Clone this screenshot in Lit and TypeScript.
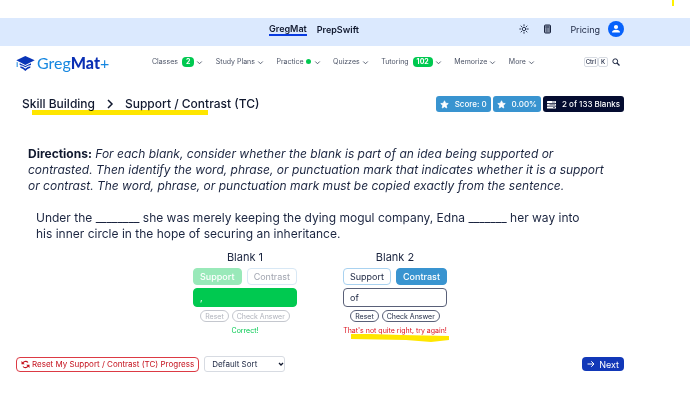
import { LitElement, html, css, nothing } from "lit";
import { customElement, property } from "lit/decorators.js";
import { classMap } from "lit/directives/class-map.js";

const star = html`<svg class="ico" viewBox="0 0 24 24" aria-hidden="true"><path fill="currentColor" stroke="currentColor" stroke-width="2" stroke-linejoin="round" d="M12 2l3 6.600 7 .8-5.200 4.900 1.400 7.100L12 17.900l-6.200 3.500 1.400-7.100L2 9.400l7-.8z"/></svg>`;

interface NavItem {
  label: string;
  badge?: string;
  dot?: boolean;
}

const NAV: NavItem[] = [
  { label: "Classes", badge: "2" },
  { label: "Study Plans" },
  { label: "Practice", dot: true },
  { label: "Quizzes" },
  { label: "Tutoring", badge: "102" },
  { label: "Memorize" },
  { label: "More" },
];

@customElement("site-header")
class SiteHeader extends LitElement {
  static styles = css`
    :host { display: block; color: #1b2540; }
    a { color: inherit; text-decoration: none; }
    button { font: inherit; color: inherit; background: none; border: 0; padding: 0; display: flex; align-items: center; }
    .top { background: #dbe9fe; height: 28px; display: grid; grid-template-columns: 1fr auto 1fr; align-items: center; padding: 0 66px 0 4px; }
    .brands { grid-column: 2; display: flex; gap: 10px; align-items: center; font-size: 9px; line-height: 11px; font-weight: 600; color: #10182e; margin-bottom: 6px; }
    .brands .on { border-bottom: 2px solid #0a3be0; }
    .tools { display: flex; justify-content: flex-end; align-items: center; font-size: 9px; margin-bottom: 6px; }
    .tools svg { display: block; }
    .sun { margin-right: 14px; }
    .calc { margin-right: 18px; }
    .price { margin-right: 8px; }
    .nav { display: grid; grid-template-columns: 136px minmax(0, 383px) 1fr; align-items: center; height: 32px; padding: 0 66px 0 16px; }
    .logo { display: flex; align-items: center; gap: 2px; font: 16px/24px Lato, sans-serif; color: #1687e0; padding-top: 2px; }
    .logo b { color: #0a2fb4; font-weight: 900; }
    .menu { display: flex; justify-content: space-between; align-items: center; font-size: 7px; line-height: 10px; color: #4b5366; }
    .menu button { gap: 2px; white-space: nowrap; }
    .badge { background: #00c950; color: #fff; font-weight: 700; border-radius: 4px; padding: 0 4px; margin-left: 2px; }
    .dot { width: 5px; height: 5px; border-radius: 50%; background: #00c950; margin: 0 1px 2px 0; }
    .find { display: flex; justify-content: flex-end; align-items: center; padding: 0 4px 0 0; }
    kbd { font: 500 6px/8px Inter, sans-serif; border: 1px solid #d7dbe2; border-radius: 2px; padding: 0 1px; min-width: 6px; text-align: center; }
    .find button { margin-left: 4px; }
  `;

  render() {
    return html`
      <div class="top">
        <div class="brands"><a class="on" href="#gregmat">GregMat</a><a href="#prepswift">PrepSwift</a></div>
        <div class="tools">
          <button class="sun" aria-label="Theme"><svg width="10" height="10" viewBox="0 0 20 20" fill="none" stroke="currentColor" stroke-width="1.800" stroke-linecap="round"><circle cx="10" cy="10" r="3.500"/><path d="M10 1.500v2M10 16.500v2M1.500 10h2M16.500 10h2M4 4l1.400 1.400M14.600 14.600L16 16M4 16l1.400-1.400M14.600 5.400L16 4"/></svg></button>
          <button class="calc" aria-label="Calculator"><svg width="9" height="10" viewBox="0 0 18 20"><rect x="3" y="2" width="12" height="16" rx="2" fill="#8d98ad" stroke="currentColor" stroke-width="2"/><path d="M5 6h8M6 10h1.500M9 10h1.500M12 10h1M6 14h1.500M9 14h1.500M12 14h1" stroke="currentColor" stroke-width="2"/></svg></button>
          <a class="price" href="#pricing">Pricing</a>
          <button aria-label="Account"><svg width="16" height="16" viewBox="0 0 32 32"><circle cx="16" cy="16" r="16" fill="#0762fb"/><circle cx="16" cy="12" r="4.200" fill="#fff"/><path fill="#fff" d="M8 23c0-4 3-5.500 8-5.500s8 1.500 8 5.500z"/></svg></button>
        </div>
      </div>
      <div class="nav">
        <a class="logo" href="#home" aria-label="GregMat+">
          <svg width="19" height="15" viewBox="0 0 57 45"><path fill="#0a35b8" d="M28 0L56 13 28 27 1 13z"/><path fill="#0a35b8" d="M11 22l17 8 17-8v5l-9 2-8 5-8-5-9-2z"/><path fill="#0a35b8" d="M13 31l8 2 7 5 7-5 8-2v4l-8 4-7 6-7-6-8-4z"/><path fill="#1687e0" d="M2 18l3 1v14H2z"/></svg>
          <span>Greg<b>Mat</b>+</span>
        </a>
        <nav class="menu">
          ${NAV.map((n) => html`<button><span>${n.label}</span>${n.badge ? html`<span class="badge">${n.badge}</span>` : nothing}${n.dot ? html`<span class="dot"></span>` : nothing}<svg width="7" height="5" viewBox="0 0 14 10" fill="none" stroke="currentColor" stroke-width="1.800"><path d="M2.500 3L7 7.500 11.500 3"/></svg></button>`)}
        </nav>
        <div class="find"><kbd>Ctrl</kbd><kbd>K</kbd>
          <button aria-label="Search"><svg width="8" height="8" viewBox="0 0 16 16" fill="none" stroke="currentColor" stroke-width="2"><circle cx="6.500" cy="6.500" r="4.800"/><path d="M10 10l5 5" stroke-width="2.600"/></svg></button>
        </div>
      </div>`;
  }
}

@customElement("blank-card")
class BlankCard extends LitElement {
  @property() name = "";
  @property() choice = "";
  @property() answer = "";
  @property() message = "";
  @property({ type: Boolean }) solved = false;

  static styles = css`
    :host { display: block; color: #1b2540; }
    .card { display: flex; flex-direction: column; align-items: stretch; text-align: center; }
    label { font-size: 11px; line-height: 16px; margin-bottom: 3px; }
    button { font: inherit; color: inherit; background: #fff; box-sizing: border-box; }
    .row { display: flex; justify-content: space-between; gap: 3px; }
    .pick { font-size: 9px; line-height: 15px; height: 17px; border: 1px solid #a9d2f0; border-radius: 4px; padding: 0 6px; }
    .pick.on { background: #3994d0; border-color: #3994d0; color: #fff; font-weight: 500; }
    input { font: 9px/16px Inter, sans-serif; color: inherit; width: 100%; min-width: 0; box-sizing: border-box; height: 19px; border: 1px solid #596078; border-radius: 4px; padding: 0 6px; margin: 3px 0; background: #fff; }
    .acts { display: flex; justify-content: center; gap: 3px; }
    .acts button { font-size: 7px; line-height: 9px; height: 12px; border: 1px solid #596078; border-radius: 6px; padding: 0 4px; white-space: nowrap; }
    .msg { font-size: 7px; line-height: 10px; margin: 4px 0 0; color: #dc1420; position: relative; white-space: nowrap; }
    .mark { position: absolute; left: 8px; top: 8px; width: 98px; height: 9px; mix-blend-mode: multiply; }
    .solved .pick { border-color: #d8e8f5; color: #a1a5b0; }
    .solved .pick.on { background: #99e9b9; border-color: #99e9b9; color: #fff; }
    .solved input { background: #00c950; border-color: #00c950; color: #fff; }
    .solved .acts button { border-color: #c4c7ce; color: #b0b3bc; }
    .solved .msg { color: #00c950; }
  `;

  render() {
    return html`<div class=${classMap({ card: true, solved: this.solved })}>
      <label for="word">${this.name}</label>
      <div class="row">${["Support", "Contrast"].map((c) => html`<button class=${classMap({ pick: true, on: c === this.choice })}>${c}</button>`)}</div>
      <input id="word" type="text" size="1" .value=${this.answer} />
      <div class="acts"><button>Reset</button><button>Check Answer</button></div>
      <p class="msg">${this.message}${this.solved ? nothing : html`<svg class="mark" viewBox="0 0 98 9" preserveAspectRatio="none"><path fill="#ffe600" d="M0 0h20l30 1 48 1v4L80 8 55 6 0 5z"/></svg>`}</p>
    </div>`;
  }
}

@customElement("app-root")
class AppRoot extends LitElement {
  static styles = css`
    :host { display: block; min-height: 100vh; box-sizing: border-box; padding-top: 18px; background: #fff; color: #1b2540; font-family: Inter, sans-serif; position: relative; }
    .speck { position: absolute; top: 0; right: 16px; width: 2px; height: 6px; background: #fff200; }
    main { padding: 18px 66px 0 16px; }
    .head { display: flex; justify-content: space-between; align-items: center; padding-left: 6px; }
    .crumbs { display: flex; align-items: center; gap: 11px; margin: 0; font-size: 12px; line-height: 16px; font-weight: 500; color: #10182e; position: relative; }
    .crumbs a { color: inherit; text-decoration: none; }
    .crumbs .mark { position: absolute; left: 10px; top: 14px; width: 176px; height: 5px; background: #ffe600; mix-blend-mode: multiply; }
    .stats { display: flex; gap: 2px; }
    .stat { display: flex; align-items: center; gap: 6px; height: 16px; border-radius: 3px; padding: 0 4px; background: #3994d0; color: #fff; font-size: 8px; font-weight: 500; white-space: nowrap; }
    .stat.dark { background: #040c30; }
    .ico { width: 9px; height: 9px; }
    .text { font-size: 12px; line-height: 16px; margin: 0; }
    .dir { padding: 0 12px; margin-top: 34px; }
    .dir b { color: #10182e; }
    .sent { padding: 0 28px 0 20px; margin-top: 16px; }
    .blanks { display: flex; justify-content: center; gap: 46px; margin-top: 7px; }
    .blanks blank-card { flex: 0 0 104px; }
    .foot { display: flex; align-items: center; margin-top: 20px; }
    .foot button { display: flex; align-items: center; gap: 2px; font: 8px/13px Inter, sans-serif; height: 15px; box-sizing: border-box; border-radius: 4px; padding: 0 4px; white-space: nowrap; }
    .foot .reset { background: #fff; border: 1px solid #dc3a44; color: #c4101c; }
    .foot .next { margin-left: auto; background: #1238b8; border: 0; color: #fff; gap: 4px; padding: 0 5px; height: 14px; font-size: 9px; }
    .sort { position: relative; margin-left: 5px; display: flex; }
    .sort svg { position: absolute; right: 1px; top: 5px; pointer-events: none; }
    select { appearance: none; font: 8px/14px Inter, sans-serif; color: #1b2540; background: #fff; border: 1px solid #d7dbe2; border-radius: 3px; height: 16px; width: 81px; margin: 0; padding: 0 0 0 7px; }
  `;

  render() {
    return html`
      <span class="speck"></span>
      <site-header></site-header>
      <main>
        <div class="head">
          <h1 class="crumbs"><a href="#skills">Skill Building</a>
            <svg width="8" height="10" viewBox="0 0 8 10" fill="none" stroke="currentColor" stroke-width="1.500"><path d="M2 1l4 4-4 4"/></svg>
            <span>Support / Contrast (TC)</span><span class="mark"></span></h1>
          <div class="stats">
            <span class="stat">${star}Score: 0</span>
            <span class="stat">${star}0.00%</span>
            <span class="stat dark"><svg class="ico" viewBox="0 0 18 18" aria-hidden="true"><rect y="2" width="18" height="4" rx="1" fill="#fff"/><rect y="7.500" width="18" height="4" rx="1" fill="#fff"/><rect y="13" width="18" height="4" rx="1" fill="#fff"/><path d="M10 4h6M5 9.500h11M12 15h4" stroke="#040c30" stroke-width="1.200"/></svg>2 of 133 Blanks</span>
          </div>
        </div>
        <p class="text dir"><b>Directions:</b> <i>For each blank, consider whether the blank is part of an idea being supported or contrasted. Then identify the word, phrase, or punctuation mark that indicates whether it is a support or contrast. The word, phrase, or punctuation mark must be copied exactly from the sentence.</i></p>
        <p class="text sent">Under the ________ she was merely keeping the dying mogul company, Edna _______ her way into his inner circle in the hope of securing an inheritance.</p>
        <div class="blanks">
          <blank-card name="Blank 1" choice="Support" answer="," message="Correct!" solved></blank-card>
          <blank-card name="Blank 2" choice="Contrast" answer="of" message="That's not quite right, try again!"></blank-card>
        </div>
        <div class="foot">
          <button class="reset"><svg width="9" height="9" viewBox="0 0 18 18" fill="none" stroke="currentColor" stroke-width="2.200"><path d="M3 8a6.300 6.300 0 0 1 11-3M15 10a6.300 6.300 0 0 1-11 3"/><path fill="currentColor" stroke="none" d="M1 2v6.500h6.500zM17 16V9.500h-6.500z"/></svg>Reset My Support / Contrast (TC) Progress</button>
          <div class="sort"><select aria-label="Sort order"><option>Default Sort</option></select><svg width="6" height="6" viewBox="0 0 6 6" fill="none" stroke="#10182e" stroke-width="1.300"><path d="M1 2l2 2 2-2"/></svg></div>
          <button class="next"><svg width="8" height="8" viewBox="0 0 16 16" fill="none" stroke="currentColor" stroke-width="2"><path d="M1 8h13M8.500 2.500L14 8l-5.500 5.500"/></svg>Next</button>
        </div>
      </main>`;
  }
}
